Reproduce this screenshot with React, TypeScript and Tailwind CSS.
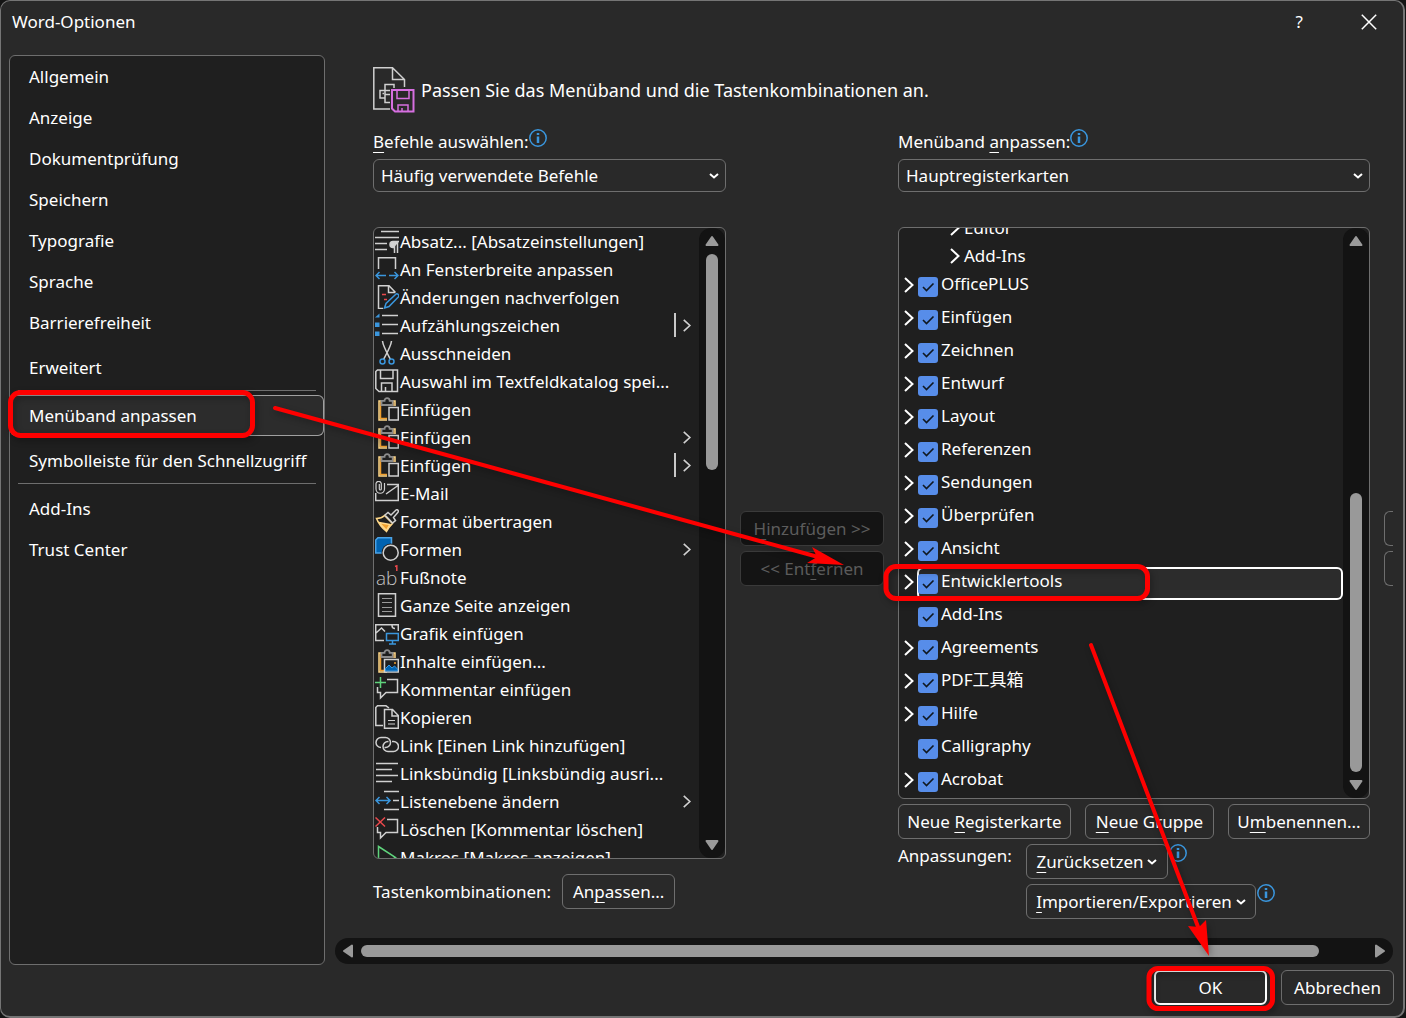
import React from 'react';

type IconName =
  | 'paragraph'
  | 'fitWidth'
  | 'track'
  | 'bullets'
  | 'cut'
  | 'save'
  | 'paste'
  | 'mail'
  | 'brush'
  | 'shapes'
  | 'footnote'
  | 'page'
  | 'picture'
  | 'pasteSpecial'
  | 'comment'
  | 'copy'
  | 'link'
  | 'alignLeft'
  | 'listLevel'
  | 'deleteComment'
  | 'play';

interface Command {
  icon: IconName;
  label: string;
  menu?: boolean;
  split?: boolean;
}

const commands: Command[] = [
  { icon: 'paragraph', label: 'Absatz... [Absatzeinstellungen]' },
  { icon: 'fitWidth', label: 'An Fensterbreite anpassen' },
  { icon: 'track', label: 'Änderungen nachverfolgen' },
  { icon: 'bullets', label: 'Aufzählungszeichen', menu: true, split: true },
  { icon: 'cut', label: 'Ausschneiden' },
  { icon: 'save', label: 'Auswahl im Textfeldkatalog spei...' },
  { icon: 'paste', label: 'Einfügen' },
  { icon: 'paste', label: 'Einfügen', menu: true },
  { icon: 'paste', label: 'Einfügen', menu: true, split: true },
  { icon: 'mail', label: 'E-Mail' },
  { icon: 'brush', label: 'Format übertragen' },
  { icon: 'shapes', label: 'Formen', menu: true },
  { icon: 'footnote', label: 'Fußnote' },
  { icon: 'page', label: 'Ganze Seite anzeigen' },
  { icon: 'picture', label: 'Grafik einfügen' },
  { icon: 'pasteSpecial', label: 'Inhalte einfügen...' },
  { icon: 'comment', label: 'Kommentar einfügen' },
  { icon: 'copy', label: 'Kopieren' },
  { icon: 'link', label: 'Link [Einen Link hinzufügen]' },
  { icon: 'alignLeft', label: 'Linksbündig [Linksbündig ausri...' },
  { icon: 'listLevel', label: 'Listenebene ändern', menu: true },
  { icon: 'deleteComment', label: 'Löschen [Kommentar löschen]' },
  { icon: 'play', label: 'Makros [Makros anzeigen]' },
];

const tabs = [
  { label: 'OfficePLUS', expandable: true },
  { label: 'Einfügen', expandable: true },
  { label: 'Zeichnen', expandable: true },
  { label: 'Entwurf', expandable: true },
  { label: 'Layout', expandable: true },
  { label: 'Referenzen', expandable: true },
  { label: 'Sendungen', expandable: true },
  { label: 'Überprüfen', expandable: true },
  { label: 'Ansicht', expandable: true },
  { label: 'Entwicklertools', expandable: true, selected: true },
  { label: 'Add-Ins', expandable: false },
  { label: 'Agreements', expandable: true },
  { label: 'PDF工具箱', expandable: true },
  { label: 'Hilfe', expandable: true },
  { label: 'Calligraphy', expandable: false },
  { label: 'Acrobat', expandable: true },
];

const clipboard = (
  <>
    <path d="M7 5.500H5.500V21.500H12M17 5.500h1.500V9" stroke="#f0a030" strokeWidth="1.500" />
    <path d="M7 4H4V23H12M17 4h3V9" stroke="#ffd888" strokeWidth="1.500" />
    <path d="M6.500 8V3.800H9.500a2.600 2.600 0 0 1 5.200 0H17.700V8z" fill="#1f1f1f" stroke="#8c8c8c" strokeWidth="1.800" />
  </>
);

const bubble = 'M12 2.500H22.500V15.500H11L5.500 21V15.500H2.500V10';

const glyphs: Record<IconName, React.ReactNode> = {
  paragraph: (
    <>
      <path d="M6 2.500H24M0 8.500H24M0 14.500H12M0 20.500H12" />
      <path d="M24 12.500H18a3 3 0 0 0 0 6h1" fill="#d4d4d4" />
      <path d="M19.500 12.500V24M22.500 12.500V24" />
    </>
  ),
  fitWidth: (
    <>
      <path d="M3.500 12V.7H20.500V12" />
      <path d="M11 18.500H1M4.500 15L1 18.500L4.500 22M14 18.500H23M19.500 15L23 18.500L19.500 22" stroke="#3a96dd" />
    </>
  ),
  track: (
    <>
      <path d="M8 23.500H3.500V.7H14L20.500 7.500M13.500 1V7.500H20" />
      <path d="M7 9.500H11M9 14.500H12" stroke="#e8484c" />
      <path d="M9.500 23L11 18.500L20.500 9.500a1.800 1.800 0 0 1 2.800 2.500L14 21.500z" stroke="#3a96dd" />
    </>
  ),
  bullets: (
    <>
      <path d="M7 2.500H23M7 11.500H23M7 20.500H23" />
      <path d="M0 4.500L4.500 .5V4.500zM0 9.500H4.500V14H0zM0 18.500H4.500V23H0z" fill="#3a96dd" stroke="none" />
    </>
  ),
  cut: (
    <>
      <path d="M7.500 0C8 5 11 10 15.500 18.500M16.500 0C16 5 13 10 8.500 18.500" />
      <circle cx="7.500" cy="20.500" r="2.500" stroke="#3a96dd" />
      <circle cx="16.500" cy="20.500" r="2.500" stroke="#3a96dd" />
    </>
  ),
  save: (
    <>
      <path d="M2.500 1H22.500V22.500H4L.8 19.500V2.500z" />
      <path d="M5.500 1V9.500H18V1M6.500 22.500V14H17V22.500M10.500 18V22.500" />
    </>
  ),
  paste: (
    <>
      {clipboard}
      <path d="M14 10.500H23.300V23H14z" fill="#1f1f1f" />
    </>
  ),
  mail: (
    <>
      <path d="M.7 12V19.500H23.300V3.500H12M11 13L23 4.500" />
      <path d="M9.500 2V8a4.200 4.200 0 0 1-8.500 0V2.500a2.700 2.700 0 0 1 5.300 0V8a1 1 0 0 1-2 0V3" strokeWidth="1.200" />
    </>
  ),
  brush: (
    <>
      <path d="M1.500 9.500C5 9.500 8 8 9.500 6.500L17.500 14.500C15 17 13 19.500 11.500 22.500C7 19 3.500 14.500 1.500 9.500z" stroke="#ffd888" />
      <path d="M4 13.500L15 15.500L11.500 21.500z" fill="#f0a030" stroke="#ffd888" />
      <path d="M10 6L13 3.500L16 6L21 1a1.500 1.500 0 0 1 2 2.200L18.500 8.500L20.500 11.500L17.500 14z" fill="#1f1f1f" />
    </>
  ),
  shapes: (
    <>
      <path d="M.7 16V3L3 .7H16.500V16z" fill="#0063b1" stroke="#4ba3e6" />
      <circle cx="15.700" cy="15.700" r="9.200" fill="#1f1f1f" stroke="none" />
      <circle cx="15.700" cy="15.700" r="7.500" />
    </>
  ),
  footnote: (
    <>
      <text x="1" y="20" fontSize="19" fontWeight="300" fill="#c4c4c4" stroke="none" fontFamily="Open Sans, sans-serif">ab</text>
      <path d="M20 1.500L21.800 .8V6" stroke="#e8484c" />
    </>
  ),
  page: (
    <>
      <path d="M3.500 .7H20.500V23.300H3.500z" />
      <path d="M7 5.500H17M7 9.500H17M7 14.500H17M7 18.500H17" stroke="#9a9a9a" strokeWidth="1.200" />
    </>
  ),
  picture: (
    <>
      <path d="M9 19.500H.7V3.700H23.300V10M1 12L6.500 7L10 10.500M17 4.500a3 3 0 0 0 3 3" />
      <path d="M11.500 12.500H23.300V19.500H11.500zM17.500 19.500V23M14 23H21" stroke="#3a96dd" />
    </>
  ),
  pasteSpecial: (
    <>
      {clipboard}
      <path d="M9.500 10.500H23.300V23H9.500z" fill="#1f1f1f" />
      <path d="M10.500 22V19.500L14 16L17 19L19.500 17L22.500 20V22z" fill="#0063b1" stroke="#3a96dd" strokeWidth="1" />
      <path d="M19 14H21" stroke="#f0a030" />
    </>
  ),
  comment: (
    <>
      <path d={bubble} />
      <path d="M5.500 0V11M0 5.500H11" stroke="#5fd37c" />
    </>
  ),
  copy: (
    <>
      <path d="M8 20.500H.8V2.500L2.500 .8H11L14 3" />
      <path d="M9.500 4.500H17.500L23.300 10.500V23.300H9.500zM17 4.500V11H23" />
      <path d="M13 15.500H20M13 19H20" strokeWidth="1.200" />
    </>
  ),
  link: (
    <>
      <path d="M6 14.500a5 5 0 0 1 0-10H10.500a5 5 0 0 1 0 10H9.500" />
      <path d="M17 8.500H18.500a5 5 0 0 1 0 10H13a5 5 0 0 1 0-10H13.500" />
    </>
  ),
  alignLeft: <path d="M1 2.500H23M1 8.500H17M1 14.500H23M1 20.500H17" />,
  listLevel: (
    <>
      <path d="M9 2.500H24M18 11.500H24M9 20.500H24" />
      <path d="M1 11.500H15M4.500 8L1 11.500L4.500 15M11.500 8L15 11.500L11.500 15" stroke="#3a96dd" />
    </>
  ),
  deleteComment: (
    <>
      <path d={bubble} />
      <path d="M.5 .5L10 9.500M10 .5L.5 9.500" stroke="#e8484c" />
    </>
  ),
  play: <path d="M3.500 1.500L20.500 12.500L3.500 23z" stroke="#5fd37c" />,
};

const CommandIcon = ({ name }: { name: IconName }) => (
  <svg width="24" height="24" viewBox="0 0 24 24" fill="none" stroke="#d0d0d0" strokeWidth="1.5" className="mb-[2px] shrink-0">
    {glyphs[name]}
  </svg>
);

const ChevronRight = ({ className = '' }: { className?: string }) => (
  <svg width="10" height="16" viewBox="0 0 10 16" fill="none" stroke="currentColor" strokeWidth="2" className={`shrink-0 ${className}`}>
    <path d="M1 1L8.500 8L1 15" />
  </svg>
);

const ChevronDown = ({ className = '' }: { className?: string }) => (
  <svg width="10" height="6" viewBox="0 0 10 6" fill="none" stroke="white" strokeWidth="2" className={`shrink-0 ${className}`}>
    <path d="M1 1L5 4.500L9 1" />
  </svg>
);

const Info = ({ className = '' }: { className?: string }) => (
  <svg width="18" height="18" viewBox="0 0 18 18" fill="none" stroke="#3a96dd" className={`shrink-0 ${className}`}>
    <circle cx="9" cy="9" r="8.200" strokeWidth="1.500" />
    <path d="M9 4V6M9 7.500V14" strokeWidth="2.500" />
  </svg>
);

const Arrow = ({ d }: { d: string }) => (
  <svg width="14" height="14" viewBox="0 0 14 14" fill="#9a9a9a" stroke="#9a9a9a" strokeWidth="2" strokeLinejoin="round" className="shrink-0">
    <path d={d} />
  </svg>
);

const VerticalScrollbar = ({ thumb }: { thumb: string }) => (
  <div className="flex w-[26px] shrink-0 flex-col items-center rounded-xl bg-[#131313] pt-[6px] pb-[6px]">
    <Arrow d="M7 3L12.500 11H1.500z" />
    <div className="flex w-3 flex-1 flex-col py-[6px]">
      <div className={`w-3 rounded-full bg-[#999] ${thumb}`} />
    </div>
    <Arrow d="M7 11L12.500 3H1.500z" />
  </div>
);

/* Marks the access key inside a caption */
const Key = ({ children }: { children: React.ReactNode }) => (
  <span className="underline decoration-1 underline-offset-4 [text-decoration-skip-ink:none]">{children}</span>
);

const Button = ({ className = '', children }: { className?: string; children: React.ReactNode }) => (
  <button
    type="button"
    className={`flex h-[35px] shrink-0 items-center justify-center rounded-md border whitespace-nowrap ${className}`}
  >
    {children}
  </button>
);

const NavItem = ({ children, className = '' }: { children: React.ReactNode; className?: string }) => (
  <li>
    <button type="button" className={`flex h-[41px] w-full items-center pl-[19px] text-left whitespace-nowrap ${className}`}>
      {children}
    </button>
  </li>
);

const Select = ({ id, value }: { id: string; value: string }) => (
  <div className="relative">
    <select id={id} className="block h-[33px] w-full appearance-none rounded-md border border-[#6e6e6e] bg-[#292929] pl-[7px]">
      <option>{value}</option>
    </select>
    <ChevronDown className="pointer-events-none absolute top-[14px] right-[7px]" />
  </div>
);

const Sidebar = () => (
  <nav className="w-[316px] shrink-0 rounded-md border border-[#6e6e6e] bg-[#1f1f1f]">
    <ul>
      <NavItem>Allgemein</NavItem>
      <NavItem>Anzeige</NavItem>
      <NavItem>Dokumentprüfung</NavItem>
      <NavItem>Speichern</NavItem>
      <NavItem>Typografie</NavItem>
      <NavItem>Sprache</NavItem>
      <NavItem>Barrierefreiheit</NavItem>
      <NavItem className="mt-1">Erweitert</NavItem>
      <li className="mx-2 mt-[2px] mb-1 h-px bg-[#6e6e6e]" />
      <NavItem className="rounded-md bg-[#2c2c2c] ring-1 ring-[#a0a0a0] ring-inset">Menüband anpassen</NavItem>
      <NavItem className="mt-1">Symbolleiste für den Schnellzugriff</NavItem>
      <li className="mx-2 mt-[2px] mb-1 h-px bg-[#6e6e6e]" />
      <NavItem>Add-Ins</NavItem>
      <NavItem>Trust Center</NavItem>
    </ul>
  </nav>
);

const CommandList = () => (
  <div className="flex h-[632px] overflow-hidden rounded-md border border-[#6e6e6e] bg-[#1f1f1f]">
    <ul className="min-w-0 flex-1">
      {commands.map((command, i) => (
        <li key={i} className="flex h-7 items-center pl-px whitespace-nowrap">
          <CommandIcon name={command.icon} />
          <span className="ml-px flex-1">{command.label}</span>
          {command.split && <span className="mr-[6px] mb-[2px] h-6 w-[2px] bg-[#c8c8c8]" />}
          {command.menu && <ChevronRight className="mr-[7px] mb-px h-[13px] text-[#d0d0d0]" />}
        </li>
      ))}
    </ul>
    <VerticalScrollbar thumb="h-[216px]" />
  </div>
);

const TabTree = () => (
  <div className="flex h-[572px] overflow-hidden rounded-md border border-[#6e6e6e] bg-[#1f1f1f]">
    <ul className="-mt-[14px] min-w-0 flex-1">
      {['Editor', 'Add-Ins'].map((group) => (
        <li key={group} className="flex h-7 items-center gap-1 pl-[51px]">
          <ChevronRight />
          {group}
        </li>
      ))}
      {tabs.map((tab) => (
        <li key={tab.label} className="flex h-[33px] items-center">
          <span className="w-[18px] shrink-0 pb-[3px] pl-[5px]">{tab.expandable && <ChevronRight />}</span>
          <label
            className={`flex h-full flex-1 items-center rounded-md pl-px ${tab.selected ? 'bg-[#2c2c2c] ring-2 ring-white ring-inset' : ''}`}
          >
            <span className="grid shrink-0">
              <input
                type="checkbox"
                defaultChecked
                className="size-5 appearance-none rounded-[3px] bg-[#578de9] [grid-area:1/1]"
              />
              <svg viewBox="0 0 20 20" fill="none" stroke="#101820" strokeWidth="1.600" className="pointer-events-none size-5 [grid-area:1/1]">
                <path d="M5 10L8.500 13.500L15.500 6.500" />
              </svg>
            </span>
            <span className="ml-[3px] pb-[5px]">{tab.label}</span>
          </label>
        </li>
      ))}
    </ul>
    <VerticalScrollbar thumb="mt-[239px] h-[279px]" />
  </div>
);

const HeadingIcon = () => (
  <svg width="42" height="46" viewBox="0 0 42 46" fill="none" stroke="#d0d0d0" strokeWidth="1.500" className="shrink-0">
    <path d="M17 42H.8V.8H19.500L31.500 12.500V20M19.500 1V12.500H31.500" />
    <path d="M12 23V17.500H21V21M17 23.500H7V31H12M17 27.500H12V35.500H17M12 23.500V27.500" />
    <path d="M9.500 26.500H11" />
    <path d="M19 23H40.500V44.500H22L19 41.500z" stroke="#d66fe0" strokeWidth="2" />
    <path d="M24 23V31.500H36V23M25 44V38H35V44M29 41V44" stroke="#d66fe0" strokeWidth="1.500" />
  </svg>
);

const CommandColumn = () => (
  <section className="w-[353px] shrink-0">
    <div className="flex h-[30px]">
      <label htmlFor="commands" className="pt-px">
        <Key>B</Key>efehle auswählen:
      </label>
      <Info />
    </div>
    <Select id="commands" value="Häufig verwendete Befehle" />
    <div className="mt-[35px]">
      <CommandList />
    </div>
    <div className="mt-[15px] flex items-center gap-[11px]">
      <span>Tastenkombinationen:</span>
      <Button className="w-[113px] border-[#6e6e6e]">
        An<Key>p</Key>assen...
      </Button>
    </div>
  </section>
);

const RibbonColumn = () => (
  <section className="min-w-[472px] flex-1">
    <div className="flex h-[30px]">
      <label htmlFor="ribbon" className="pt-px">
        Menüband <Key>a</Key>npassen:
      </label>
      <Info />
    </div>
    <Select id="ribbon" value="Hauptregisterkarten" />
    <div className="mt-[35px]">
      <TabTree />
    </div>
    <div className="mt-[5px] flex gap-[14px]">
      <Button className="w-[173px] border-[#6e6e6e]">
        Neue&nbsp;<Key>R</Key>egisterkarte
      </Button>
      <Button className="w-[129px] border-[#6e6e6e]">
        <Key>N</Key>eue Gruppe
      </Button>
      <Button className="w-[142px] border-[#6e6e6e]">
        U<Key>m</Key>benennen...
      </Button>
    </div>
    <div className="mt-[5px] flex">
      <span className="w-32 shrink-0">Anpassungen:</span>
      <div className="flex flex-col gap-[5px]">
        <div className="flex">
          <Button className="w-[142px] border-[#6e6e6e]">
            <Key>Z</Key>urücksetzen
            <ChevronDown className="ml-1" />
          </Button>
          <Info className="ml-px" />
        </div>
        <div className="flex">
          <Button className="w-[230px] border-[#6e6e6e]">
            <Key>I</Key>mportieren/Exportieren
            <ChevronDown className="ml-1" />
          </Button>
          <Info className="ml-px" />
        </div>
      </div>
    </div>
  </section>
);

const Annotations = () => (
  <svg
    width="1406"
    height="1018"
    viewBox="0 0 1406 1018"
    fill="none"
    stroke="#fe0000"
    strokeWidth="5"
    className="pointer-events-none absolute top-0 left-0 drop-shadow-[2px_3px_3px_rgba(0,0,0,0.3)]"
  >
    <rect x="10.500" y="392.500" width="242" height="43" rx="10" />
    <rect x="886" y="566.500" width="261.500" height="32" rx="10" />
    <rect x="1149" y="968.500" width="123.500" height="40" rx="9" />
    <path d="M275 408L820 557.500M1091 645L1200 932" strokeWidth="4" strokeLinecap="round" />
    <path d="M844 565L812 547L817 557L807 563zM1209 956L1206 920L1199 927L1188 926z" fill="#fe0000" stroke="none" />
  </svg>
);

const App: React.FC = () => {
  return (
    <div className="relative flex min-h-screen flex-col bg-[#141414] pr-px font-['Noto_Sans','Noto_Sans_CJK_SC',sans-serif] text-[17px] leading-6 text-white">
      <div className="flex flex-1 flex-col rounded-[10px] border border-r-2 border-b-2 border-[#757575] bg-[#292929]">
        {/* Title bar */}
        <header className="flex h-[54px] shrink-0 items-start pt-[9px] pr-[26px] pl-[11px]">
          <h1 className="flex-1">Word-Optionen</h1>
          <button type="button" className="mr-[58px]">?</button>
          <button type="button" aria-label="Schließen" className="mt-1">
            <svg width="16" height="16" viewBox="0 0 16 16" stroke="white" strokeWidth="1.500">
              <path d="M.8 .8L15.200 15.200M15.200 .8L.8 15.200" />
            </svg>
          </button>
        </header>

        <div className="flex flex-1 gap-[10px] pr-[10px] pl-2">
          <Sidebar />

          <main className="flex min-w-0 flex-1 flex-col">
            <div className="flex-1 overflow-hidden pt-3 pb-[19px] pl-[38px]">
              <div className="flex gap-[6px]">
                <HeadingIcon />
                <h2 className="pt-[11px] text-lg leading-6 whitespace-nowrap">
                  Passen Sie das Menüband und die Tastenkombinationen an.
                </h2>
              </div>

              <div className="mt-4 flex gap-[14px]">
                <CommandColumn />
                <div className="flex w-36 shrink-0 flex-col gap-[5px] pt-[382px]">
                  <button type="button" disabled className="h-[35px] rounded-md border border-[#3a3a3a] bg-[#141414] text-[#5c5c5c]">
                    <Key>H</Key>inzufügen &gt;&gt;
                  </button>
                  <button type="button" disabled className="h-[35px] rounded-md border border-[#3a3a3a] bg-[#141414] text-[#5c5c5c]">
                    &lt;&lt; Ent<Key>f</Key>ernen
                  </button>
                </div>
                <RibbonColumn />
                <div className="flex w-[9px] shrink-0 flex-col gap-[5px] pt-[382px]">
                  <button type="button" aria-label="Nach oben" className="h-[35px] rounded-l-md border border-r-0 border-[#6e6e6e]" />
                  <button type="button" aria-label="Nach unten" className="h-[35px] rounded-l-md border border-r-0 border-[#6e6e6e]" />
                </div>
              </div>
            </div>

            {/* Horizontal scrollbar */}
            <div className="mb-px flex h-[26px] shrink-0 items-center rounded-full bg-[#131313] px-[6px]">
              <Arrow d="M3 7L11 1.500V12.500z" />
              <div className="flex-1 pr-[54px] pl-[6px]">
                <div className="h-3 rounded-full bg-[#999]" />
              </div>
              <Arrow d="M11 7L3 1.500V12.500z" />
            </div>
          </main>
        </div>

        <footer className="flex justify-end gap-[14px] pt-[5px] pr-[9px] pb-[11px]">
          <Button className="w-[113px] border-2 border-white">OK</Button>
          <Button className="w-[113px] border-[#6e6e6e]">Abbrechen</Button>
        </footer>
      </div>

      <Annotations />
    </div>
  );
};

export default App;
